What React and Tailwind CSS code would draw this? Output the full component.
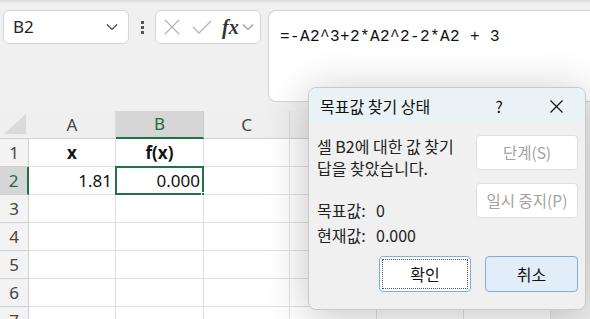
import React from 'react';

const cols = [
  { key: 'A', w: 'w-[87px]', label: true },
  { key: 'B', w: 'w-[88px]', label: true },
  { key: 'C', w: 'w-[86px]', label: true },
  { key: 'D', w: 'w-[87px]' },
  { key: 'E', w: 'w-[87px]' },
  { key: 'F', w: 'w-[87px]' },
];

const cells = {
  A1: { text: 'x', align: 'justify-center', bold: true },
  B1: { text: 'f(x)', align: 'justify-center', bold: true },
  A2: { text: '1.81', align: 'justify-end' },
  B2: { text: '0.000', align: 'justify-end' },
};

const Chevron = ({ className }) => (
  <svg className={className} width="12" height="8" viewBox="0 0 12 8" fill="none">
    <path d="M1 1.5L6 6.5L11 1.5" stroke="currentColor" strokeWidth="1.2" />
  </svg>
);

const ToolBar = () => (
  <div className="flex items-start h-[92px] pl-[3px]">
    {/* name box */}
    <div className="w-[126px] h-[34px] bg-white border border-[#d4d4d4] rounded-[6px] flex items-center justify-between pl-[9px] pr-[10px]">
      <span className="text-[17px] text-[#222]">B2</span>
      <Chevron className="text-[#444]" />
    </div>
    <div className="ml-[12px] mt-[11px] flex flex-col gap-[2px]">
      <span className="w-[3px] h-[3px] bg-[#555]" />
      <span className="w-[3px] h-[3px] bg-[#555]" />
      <span className="w-[3px] h-[3px] bg-[#555]" />
    </div>
    {/* cancel / enter / fx */}
    <div className="ml-[11px] w-[106px] h-[34px] bg-white border border-[#d4d4d4] rounded-[6px] flex items-center pl-[7px]">
      <svg width="18" height="18" viewBox="0 0 18 18" fill="none">
        <path d="M2 2L16 16M16 2L2 16" stroke="#b5b5b5" strokeWidth="1.3" />
      </svg>
      <svg className="ml-[10px]" width="22" height="18" viewBox="0 0 22 18" fill="none">
        <path d="M2 9L8 15L20 3" stroke="#b5b5b5" strokeWidth="1.3" />
      </svg>
      <span
        className="ml-[9px] text-[20px] italic font-bold text-[#333] leading-none"
        style={{ fontFamily: '"Liberation Serif", serif' }}
      >
        fx
      </span>
      <Chevron className="ml-[3px] text-[#999]" />
    </div>
    {/* formula bar */}
    <div className="ml-[7px] flex-1 h-[92px] bg-white border border-[#d4d4d4] border-r-0 rounded-l-[8px] pl-[11px] pt-[12px]">
      <span
        className="text-[16px] tracking-[0.4px] text-[#111]"
        style={{ fontFamily: '"Liberation Mono", monospace' }}
      >
        =-A2^3+2*A2^2-2*A2 + 3
      </span>
    </div>
  </div>
);

const Grid = () => (
  <div className="text-[17px]" style={{ fontFamily: '"Noto Sans", sans-serif' }}>
    {/* header row */}
    <div className="flex h-[28px]">
      <div className="w-[29px] shrink-0 bg-[#efefef] border-b border-[#d0d0d0] relative">
        <svg className="absolute left-[4px] bottom-[4px]" width="22" height="20" viewBox="0 0 22 20">
          <path d="M0 20L22 20L22 0Z" fill="#dadada" />
        </svg>
      </div>
      {cols.map((c) => (
        <div
          key={c.key}
          className={`${c.w} shrink-0 flex items-center justify-center border-r ${
            c.key === 'B'
              ? 'bg-[#d6d6d6] text-[#1e6b40] border-b-2 border-b-[#217346] border-r-[#c8c8c8]'
              : 'bg-[#efefef] text-[#444] border-b border-b-[#d0d0d0] border-r-[#dcdcdc]'
          }`}
        >
          {c.label ? c.key : null}
        </div>
      ))}
    </div>
    {[1, 2, 3, 4, 5, 6, 7].map((r) => (
      <div key={r} className="flex h-[28px]">
        <div
          className={`w-[29px] shrink-0 flex items-center justify-center border-b border-[#d0d0d0] ${
            r === 2
              ? 'bg-[#d6d6d6] text-[#1e6b40] border-r-2 border-r-[#217346]'
              : 'bg-[#f3f3f3] text-[#444] border-r border-r-[#d0d0d0]'
          }`}
        >
          {r}
        </div>
        {cols.map((c) => {
          const id = `${c.key}${r}`;
          const cell = cells[id];
          return (
            <div
              key={id}
              className={`${c.w} shrink-0 bg-white border-r border-b border-[#e1e1e1] flex items-center px-[3px] relative ${
                cell ? cell.align : ''
              }`}
            >
              {cell && (
                <span className={`text-[#111] ${cell.bold ? 'font-bold' : ''}`}>{cell.text}</span>
              )}
              {id === 'B2' && (
                <>
                  <div className="absolute -left-[1px] -top-[1px] -right-[1px] -bottom-[1px] border-2 border-[#217346]" />
                  <div className="absolute -right-[4px] -bottom-[4px] w-[6px] h-[6px] bg-[#217346] border border-white" />
                </>
              )}
            </div>
          );
        })}
      </div>
    ))}
  </div>
);

const Dialog = () => (
  <div
    className="absolute left-[308px] top-[87px] w-[278px] h-[223px] rounded-[8px] border border-[#c9c9c9] bg-[#f0f0f0] overflow-hidden shadow-[0_6px_44px_rgba(0,0,0,0.24)]"
    style={{ fontFamily: '"Noto Sans CJK KR", "Noto Sans", sans-serif' }}
  >
    <div className="h-[36px] bg-[#e9f3f6] flex items-center pl-[11px] text-[16px] text-[#111]">
      <span className="flex-1">목표값 찾기 상태</span>
      <span className="w-[20px] text-center">?</span>
      <svg className="ml-[41px] mr-[22px]" width="13" height="13" viewBox="0 0 13 13" fill="none">
        <path d="M0.5 0.5L12.5 12.5M12.5 0.5L0.5 12.5" stroke="#111" strokeWidth="1.2" />
      </svg>
    </div>
    <div className="flex pl-[8px] pr-[7px] pt-[11px]">
      <div className="flex-1 text-[16px] text-[#222] leading-[22px]">
        <div>셀 B2에 대한 값 찾기</div>
        <div>답을 찾았습니다.</div>
        <div className="mt-[19px] leading-[25px]">
          <div className="flex"><span className="w-[59px]">목표값:</span><span>0</span></div>
          <div className="flex"><span className="w-[59px]">현재값:</span><span>0.000</span></div>
        </div>
      </div>
      <div className="flex flex-col gap-[13px]">
        <div className="w-[102px] h-[35px] bg-white border border-[#dfdfdf] rounded-[4px] flex items-center justify-center text-[15.5px] text-[#a3a3a3]">
          단계(S)
        </div>
        <div className="w-[102px] h-[35px] bg-white border border-[#dfdfdf] rounded-[4px] flex items-center justify-center text-[15.5px] text-[#a3a3a3]">
          일시 중지(P)
        </div>
      </div>
    </div>
    <div className="flex justify-end gap-[14px] pr-[7px] mt-[8px]">
      <div className="w-[92px] h-[36px] bg-white border border-[#7eaedc] rounded-[4px] p-[2px]">
        <div className="w-full h-full border border-dotted border-[#555] flex items-center justify-center text-[16px] text-[#111]">
          확인
        </div>
      </div>
      <div className="w-[93px] h-[36px] bg-[#e1edf8] border border-[#7eaedc] rounded-[4px] flex items-center justify-center text-[16px] text-[#111]">
        취소
      </div>
    </div>
  </div>
);

export default function App() {
  return (
    <div
      className="relative w-[590px] h-[319px] overflow-hidden bg-[#f0f0f0]"
      style={{ fontFamily: '"Noto Sans", sans-serif' }}
    >
      <div className="h-[3px] bg-gradient-to-b from-[#d8d8d8] to-[#efefef]" />
      <div className="pt-[7px]">
        <ToolBar />
      </div>
      <div className="mt-[9px]">
        <Grid />
      </div>
      <Dialog />
    </div>
  );
}
